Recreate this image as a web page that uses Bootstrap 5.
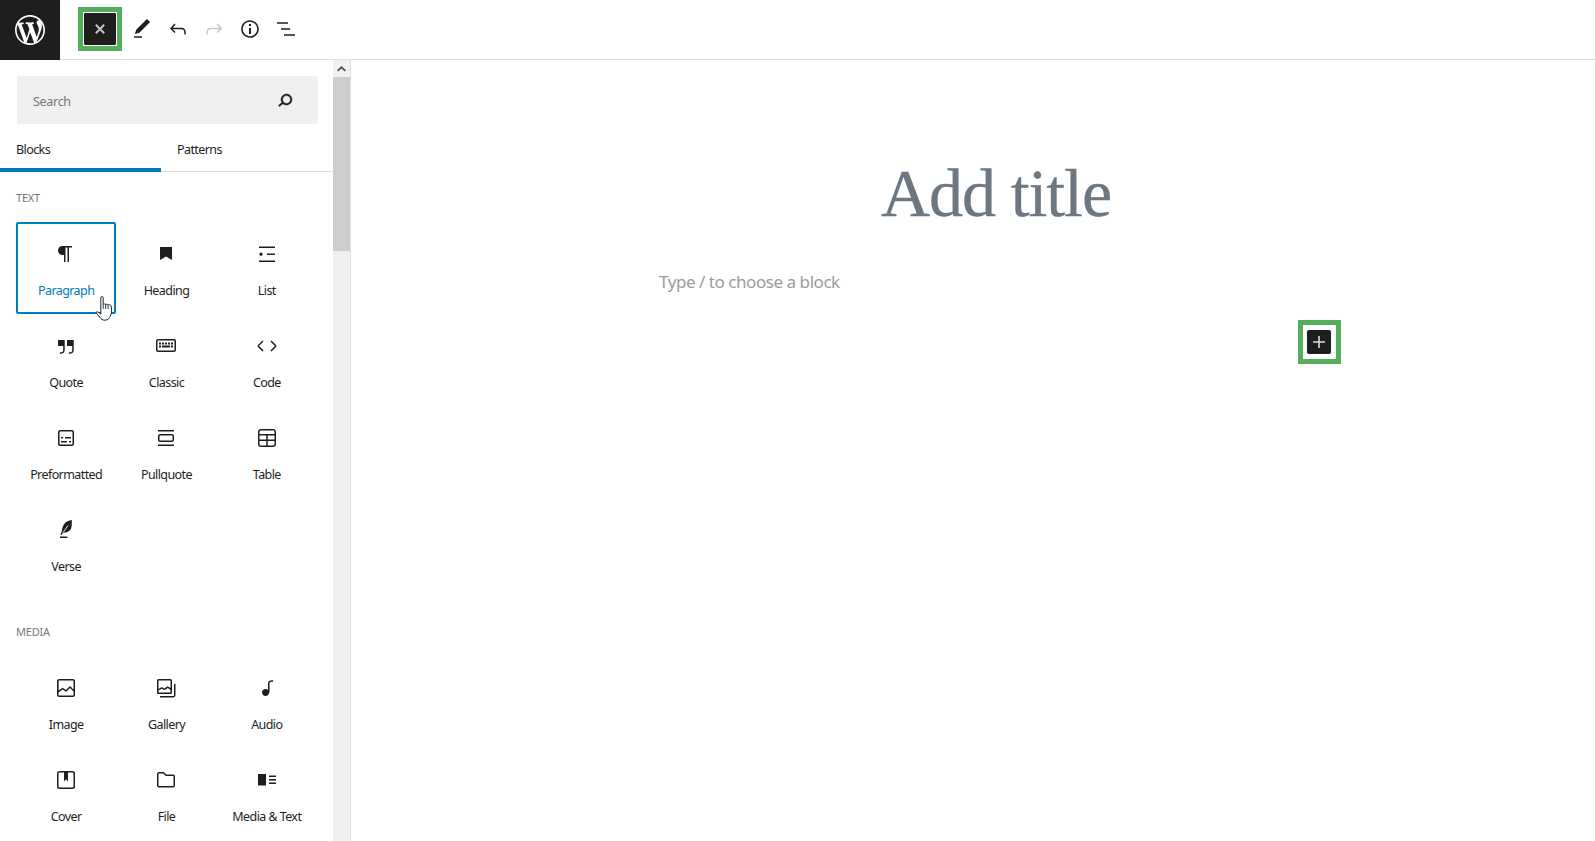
<!DOCTYPE html>
<html lang="en">
<head>
  <meta charset="UTF-8" />
  <meta name="viewport" content="width=device-width, initial-scale=1.0"/>
  <title>Add title</title>
  <link rel="stylesheet" href="https://cdn.jsdelivr.net/npm/bootstrap@5.3.0/dist/css/bootstrap.min.css"/>
  <style>
    body {
      font-family: "Noto Sans", sans-serif;
      font-size: 12.5px;
      letter-spacing: -.58px;
      color: #1e1e1e;
      background: #fff;
      overflow: hidden;
    }
    svg { fill: currentColor; display: block; }
    .top-bar { height: 60px; border-bottom: 1px solid #e0e0e0; }
    .wp-logo { width: 60px; height: 60px; background: #1e1e1e; color: #fff; }
    .hl-box { border: 5px solid #55ae5c; width: 44px; height: 44px; }
    .close-slot { margin: 7px 2px 0 18px; }
    .close-btn { width: 34px; height: 34px; background: #1e1e1e; color: #c4c4c4; border: 1px solid #fff; border-radius: 2px; }
    .tool-row { margin-top: 7px; }
    .tool-btn { width: 36px; height: 44px; }
    .tool-btn.off { color: #c8c8c8; }
    .work-area { height: 781px; }
    .side-panel { width: 351px; border-right: 1px solid #e0e0e0; }
    .side-inner { width: 333px; }
    .fake-scroll { width: 17px; background: #f0f0f0; }
    .scroll-up { height: 17px; background: #f1f1f1; color: #505050; }
    .scroll-thumb { height: 174px; background: #cdcdcd; }
    .search-box { height: 48px; margin: 16px 15px 0 17px; background: #f0f0f0; border-radius: 2px; padding: 5px 21px 0 16px; color: #757575; letter-spacing: -.3px; }
    .search-box svg { stroke: currentColor; stroke-width: .5; color: #1e1e1e; margin-top: -5px; }
    .tab-row { height: 48px; border-bottom: 1px solid #ddd; }
    .tab-row .nav-link { width: 161px; height: 48px; padding: 16px 0 0 16px; color: #1e1e1e; line-height: 20px; }
    .tab-row .nav-link.active { border-bottom: 4px solid #007cba; }
    .group-label { font-size: 11px; line-height: 16px; color: #757575; text-transform: uppercase; padding-left: 16px; letter-spacing: -.2px; }
    .text-label { margin-top: 18px; }
    .block-grid { padding: 0 16px; }
    .text-grid { margin-top: 16px; }
    .media-label { margin-top: 34px; }
    .media-grid { margin-top: 16px; }
    .block-item { height: 92px; padding-top: 20px; border: 2px solid transparent; border-radius: 2px; }
    .block-item svg { margin-top: -2px; }
    .block-item .block-name { line-height: 18px; margin-top: 16px; white-space: nowrap; }
    .block-item.picked { border-color: #007cba; color: #007cba; }
    .block-item.picked svg { color: #1e1e1e; }
    .hand-cursor { position: absolute; left: 95px; top: 236px; }
    .writing-col { width: 676px; margin-left: 308px; }
    .post-title { font-family: "Liberation Serif", serif; font-size: 68px; letter-spacing: -1.1px; line-height: 80px; color: #6c7781; margin: 93px 2px 0 0; font-weight: 400; -webkit-text-stroke: .3px #6c7781; }
    .type-hint { font-size: 17px; letter-spacing: -.45px; line-height: 26px; color: #9b9b9b; margin: 36px 0 0; }
    .plus-wrap { margin-top: 25px; margin-right: -6px; }
    .plus-box { width: 43px; padding: 5px 5px 5px 4px; }
    .plus-btn { width: 24px; height: 24px; background: #1e1e1e; color: #ddd; border-radius: 2px; }
  </style>
</head>
<body>
  <header class="top-bar d-flex align-items-start">
    <div class="wp-logo d-flex align-items-center justify-content-center">
      <svg width="30" height="30" viewBox="0 0 20 20"><path d="M20 10c0-5.51-4.49-10-10-10C4.48 0 0 4.49 0 10c0 5.52 4.48 10 10 10 5.51 0 10-4.48 10-10zM7.78 15.37L4.37 6.22c.55-.02 1.17-.08 1.17-.08.5-.06.44-1.13-.06-1.11 0 0-1.45.11-2.37.11-.18 0-.37 0-.58-.01C4.12 2.69 6.87 1.11 10 1.11c2.33 0 4.45.87 6.05 2.34-.68-.11-1.65.39-1.65 1.58 0 .74.45 1.36.9 2.1.35.61.55 1.36.55 2.46 0 1.49-1.4 5-1.4 5l-3.03-8.37c.54-.02.82-.17.82-.17.5-.05.44-1.25-.06-1.22 0 0-1.44.12-2.38.12-.87 0-2.33-.12-2.33-.12-.5-.03-.56 1.2-.06 1.22l.92.08 1.26 3.41zM17.41 10c.24-.64.74-1.87.43-4.25.7 1.29 1.05 2.71 1.05 4.25 0 3.29-1.73 6.24-4.4 7.78.97-2.59 1.94-5.2 2.92-7.78zM6.1 18.09C3.12 16.65 1.11 13.53 1.11 10c0-1.3.23-2.48.72-3.59C3.25 10.3 4.67 14.2 6.1 18.09zm4.03-6.63l2.58 6.98c-.86.29-1.76.45-2.71.45-.79 0-1.57-.11-2.29-.33.81-2.38 1.62-4.74 2.42-7.1z"/></svg>
    </div>
    <div class="hl-box close-slot">
      <div class="close-btn d-flex align-items-center justify-content-center">
        <svg width="10" height="10" viewBox="0 0 10 10"><path d="M.8.800l8.400 8.400M9.200.800L.8 9.200" stroke="currentColor" stroke-width="2"/></svg>
      </div>
    </div>
    <div class="d-flex tool-row">
      <div class="tool-btn d-flex align-items-center justify-content-center"><svg width="24" height="24" viewBox="0 0 24 24"><path d="M20.1 5.1L16.9 2 6.2 12.7l-1.3 4.4 4.5-1.3L20.1 5.1zM4 20.8h8v-1.5H4v1.5z"/></svg></div>
      <div class="tool-btn d-flex align-items-center justify-content-center"><svg width="24" height="24" viewBox="0 0 24 24"><path d="M18.3 11.7c-.6-.6-1.4-.9-2.3-.9H6.7l2.9-3.3-1.1-1-4.5 5L8.5 16l1-1-2.7-2.7H16c.5 0 .9.2 1.3.5 1 1 1 3.4 1 4.5v.3h1.5v-.2c0-1.5 0-4.3-1.5-5.7z"/></svg></div>
      <div class="tool-btn off d-flex align-items-center justify-content-center"><svg width="24" height="24" viewBox="0 0 24 24"><path d="M15.6 6.5l-1.1 1 2.9 3.3H8c-.9 0-1.7.3-2.3.9-1.4 1.5-1.4 4.2-1.4 5.6v.2h1.5v-.3c0-1.1 0-3.5 1-4.5.3-.3.7-.5 1.3-.5h9.2L14.5 15l1.1 1.1 4.6-4.6-4.6-5z"/></svg></div>
      <div class="tool-btn d-flex align-items-center justify-content-center"><svg width="24" height="24" viewBox="0 0 24 24"><path d="M12 3.2c-4.8 0-8.8 3.9-8.8 8.8 0 4.8 3.9 8.8 8.8 8.8 4.8 0 8.8-3.9 8.8-8.8 0-4.8-4-8.8-8.8-8.8zm0 16c-4 0-7.2-3.3-7.2-7.2C4.8 8 8 4.8 12 4.8s7.2 3.3 7.2 7.2c0 4-3.2 7.2-7.2 7.2zM11 17h2v-6h-2v6zm0-8h2V7h-2v2z"/></svg></div>
      <div class="tool-btn d-flex align-items-center justify-content-center"><svg width="24" height="24" viewBox="0 0 24 24"><path d="M3 5.2h11v1.5H3zM7 11.2h9v1.5H7zM10 17.2h11v1.5H10z"/></svg></div>
    </div>
  </header>

  <div class="work-area d-flex">
    <aside class="side-panel d-flex flex-shrink-0 position-relative">
      <div class="side-inner overflow-hidden">
        <div class="search-box d-flex align-items-center justify-content-between">
          <span>Search</span>
          <svg width="24" height="24" viewBox="0 0 24 24"><path d="M13.5 6C10.5 6 8 8.5 8 11.5c0 1.1.3 2.1.9 3l-3.4 3 1 1.1 3.4-2.9c1 .9 2.2 1.4 3.6 1.4 3 0 5.5-2.5 5.5-5.5C19 8.5 16.5 6 13.5 6zm0 9.5c-2.2 0-4-1.8-4-4s1.8-4 4-4 4 1.8 4 4-1.8 4-4 4z"/></svg>
        </div>
        <nav class="nav tab-row">
          <a class="nav-link active" href="#">Blocks</a>
          <a class="nav-link" href="#">Patterns</a>
        </nav>

        <div class="group-label text-label">Text</div>
        <div class="row g-0 block-grid text-grid">
          <div class="col-4"><div class="block-item picked d-flex flex-column align-items-center">
            <svg width="24" height="24" viewBox="0 0 24 24"><path d="M18 4H8.5C6 4 4 6 4 8.5S6 13 8.5 13H10v7h1.5V5.5h2V20H15V5.5h3V4z"/></svg>
            <div class="block-name">Paragraph</div>
          </div></div>
          <div class="col-4"><div class="block-item d-flex flex-column align-items-center">
            <svg width="24" height="24" viewBox="0 0 24 24"><path d="M6 5h12v13l-6-3.6L6 18z"/></svg>
            <div class="block-name">Heading</div>
          </div></div>
          <div class="col-4"><div class="block-item d-flex flex-column align-items-center">
            <svg width="24" height="24" viewBox="0 0 24 24"><path d="M4 4.5h16V6H4zM12 11.5h8V13h-8zM4 18.5h16V20H4z"/><circle cx="6" cy="12.2" r="1.6"/></svg>
            <div class="block-name">List</div>
          </div></div>
          <div class="col-4"><div class="block-item d-flex flex-column align-items-center">
            <svg width="24" height="24" viewBox="0 0 24 24"><path d="M13 6v6h5.2v4c0 .8-.2 1.4-.5 1.7-.6.6-1.6.6-2.5.5h-.3v1.5h.5c1 0 2.3-.1 3.3-1 .6-.6 1-1.6 1-2.8V6H13zm-9 6h5.2v4c0 .8-.2 1.4-.5 1.7-.6.6-1.6.6-2.5.5h-.3v1.5h.5c1 0 2.3-.1 3.3-1 .6-.6 1-1.6 1-2.8V6H4v6z"/></svg>
            <div class="block-name">Quote</div>
          </div></div>
          <div class="col-4"><div class="block-item d-flex flex-column align-items-center">
            <svg width="24" height="24" viewBox="0 0 24 24"><path d="M20 5H4c-1.1 0-2 .9-2 2v9c0 1.1.9 2 2 2h16c1.1 0 2-.9 2-2V7c0-1.1-.9-2-2-2zm.5 11c0 .3-.2.5-.5.5H4c-.3 0-.5-.2-.5-.5V7c0-.3.2-.5.5-.5h16c.3 0 .5.2.5.5v9zM5 8.500h2v2H5zM8 8.500h2v2H8zM11 8.500h2v2h-2zM14 8.500h2v2h-2zM17 8.500h2v2h-2zM5 11.500h2v2H5zM8 11.500h8v2H8zM17 11.500h2v2h-2z"/></svg>
            <div class="block-name">Classic</div>
          </div></div>
          <div class="col-4"><div class="block-item d-flex flex-column align-items-center">
            <svg width="24" height="24" viewBox="0 0 24 24"><path d="M20.8 10.7l-4.3-4.3-1.1 1.1 4.3 4.3c.1.1.1.3 0 .4l-4.3 4.3 1.1 1.1 4.3-4.3c.7-.8.7-1.9 0-2.6zM4.200 11.800l4.300-4.300-1-1-4.300 4.300c-.7.7-.7 1.800 0 2.500l4.300 4.300 1.100-1.100-4.300-4.300c-.2-.1-.2-.3-.1-.4z"/></svg>
            <div class="block-name">Code</div>
          </div></div>
          <div class="col-4"><div class="block-item d-flex flex-column align-items-center">
            <svg width="24" height="24" viewBox="0 0 24 24"><path d="M18 4H6c-1.1 0-2 .9-2 2v12c0 1.1.9 2 2 2h12c1.1 0 2-.9 2-2V6c0-1.1-.9-2-2-2zm.5 14c0 .3-.2.5-.5.5H6c-.3 0-.5-.2-.5-.5V6c0-.3.2-.5.5-.5h12c.3 0 .5.2.5.5v12zM7 16.500h6V15H7v1.500zm4-4h6V11h-6v1.500zM9 11H7v1.500h2V11zm6 5.500h2V15h-2v1.500z"/></svg>
            <div class="block-name">Preformatted</div>
          </div></div>
          <div class="col-4"><div class="block-item d-flex flex-column align-items-center">
            <svg width="24" height="24" viewBox="0 0 24 24"><path d="M18 8H6c-1.1 0-2 .9-2 2v4c0 1.1.9 2 2 2h12c1.1 0 2-.9 2-2v-4c0-1.1-.9-2-2-2zm.5 6c0 .3-.2.5-.5.5H6c-.3 0-.5-.2-.5-.5v-4c0-.3.2-.5.5-.5h12c.3 0 .5.2.5.5v4zM4 4v1.500h16V4H4zm0 16h16v-1.500H4V20z"/></svg>
            <div class="block-name">Pullquote</div>
          </div></div>
          <div class="col-4"><div class="block-item d-flex flex-column align-items-center">
            <svg width="24" height="24" viewBox="0 0 24 24"><path fill-rule="evenodd" d="M6 3h12c1.700 0 3 1.300 3 3v12c0 1.700-1.300 3-3 3H6c-1.700 0-3-1.300-3-3V6c0-1.700 1.300-3 3-3zM4.500 8h15V6c0-.8-.7-1.500-1.500-1.500H6c-.8 0-1.500.7-1.500 1.500zm0 1.500v4h6.750v-4zm8.250 0v4h6.750v-4zM4.500 15v3c0 .8.7 1.500 1.500 1.500h5.250V15zm8.250 0v4.500H18c.8 0 1.500-.7 1.500-1.500v-3z"/></svg>
            <div class="block-name">Table</div>
          </div></div>
          <div class="col-4"><div class="block-item d-flex flex-column align-items-center">
            <svg width="24" height="24" viewBox="0 0 24 24"><path d="M17.800 2c-3 .7-5.700 1.700-7.200 3.400C9 7.200 8.100 10.500 7.700 13.400l-1.300 3 1.300.6 1.100-2.300c3 .1 5.800-.8 7.400-2.600 1.700-1.900 1.700-6.300 1.600-10.100zM6 18.500h7.500V20H6z"/><path d="M9 14.500l5-7" stroke="#fff" stroke-width=".9"/></svg>
            <div class="block-name">Verse</div>
          </div></div>
        </div>

        <div class="group-label media-label">Media</div>
        <div class="row g-0 block-grid media-grid">
          <div class="col-4"><div class="block-item d-flex flex-column align-items-center">
            <svg width="24" height="24" viewBox="0 0 24 24"><path d="M19 3H5c-1.1 0-2 .9-2 2v14c0 1.100.9 2 2 2h14c1.100 0 2-.9 2-2V5c0-1.100-.9-2-2-2zM5 4.500h14c.3 0 .5.2.5.5v8.400l-3-2.900c-.3-.3-.8-.3-1 0L11.900 14 9 12c-.3-.2-.6-.2-.8 0l-3.600 2.600V5c-.1-.3.1-.5.4-.5zm14 15H5c-.3 0-.5-.2-.5-.5v-2.400l4.100-3 3 1.900c.3.2.7.2.9-.1L16 12l3.500 3.400V19c0 .3-.2.5-.5.5z"/></svg>
            <div class="block-name">Image</div>
          </div></div>
          <div class="col-4"><div class="block-item d-flex flex-column align-items-center">
            <svg width="24" height="24" viewBox="0 0 24 24"><path fill-rule="evenodd" d="M16.375 4.5H4.625a.125.125 0 0 0-.125.125v8.254l2.859-1.54a.75.75 0 0 1 .68-.016l2.384 1.142 2.89-2.074a.75.75 0 0 1 .874 0l2.313 1.66V4.625a.125.125 0 0 0-.125-.125zm.125 9.398-2.75-1.975-2.813 2.02a.75.75 0 0 1-.76.067l-2.444-1.17L4.5 14.583v1.792c0 .069.056.125.125.125h11.750a.125.125 0 0 0 .125-.125v-2.477zM4.625 3C3.728 3 3 3.728 3 4.625v11.750C3 17.273 3.728 18 4.625 18h11.750c.898 0 1.625-.727 1.625-1.625V4.625C18 3.728 17.273 3 16.375 3H4.625zM20 8v11c0 .69-.31 1-.999 1H6v1.5h13.001c1.520 0 2.499-.982 2.499-2.5V8H20z"/></svg>
            <div class="block-name">Gallery</div>
          </div></div>
          <div class="col-4"><div class="block-item d-flex flex-column align-items-center">
            <svg width="24" height="24" viewBox="0 0 24 24"><path d="M17.7 4.3c-1.2 0-2.8 0-3.800 1-.6.6-.9 1.500-.9 2.600V14c-.6-.6-1.500-1-2.500-1C8.600 13 7 14.600 7 16.500S8.600 20 10.500 20c1.500 0 2.800-1 3.300-2.300.5-.8.7-1.800.7-2.500V7.900c0-.7.2-1.200.5-1.600.6-.6 1.800-.6 2.800-.6h.3V4.300h-.4z"/></svg>
            <div class="block-name">Audio</div>
          </div></div>
          <div class="col-4"><div class="block-item d-flex flex-column align-items-center">
            <svg width="24" height="24" viewBox="0 0 24 24"><path d="M18.700 3H5.300C4 3 3 4 3 5.300v13.400C3 20 4 21 5.300 21h13.400c1.300 0 2.300-1 2.300-2.300V5.300C21 4 20 3 18.700 3zm.8 15.700c0 .4-.4.8-.8.8H5.300c-.4 0-.8-.4-.8-.8V5.300c0-.4.4-.8.8-.8h4.700v8.900l2-2.100 2 2.100V4.500h4.700c.4 0 .8.4.8.8v13.400z"/></svg>
            <div class="block-name">Cover</div>
          </div></div>
          <div class="col-4"><div class="block-item d-flex flex-column align-items-center">
            <svg width="24" height="24" viewBox="0 0 24 24"><path fill="none" stroke="currentColor" stroke-width="1.5" d="M5 4.750h4.500L12 7.250h7a1.250 1.250 0 0 1 1.250 1.250V17.500a1.250 1.250 0 0 1-1.250 1.250H5a1.250 1.250 0 0 1-1.250-1.250V6A1.250 1.250 0 0 1 5 4.750z"/></svg>
            <div class="block-name">File</div>
          </div></div>
          <div class="col-4"><div class="block-item d-flex flex-column align-items-center">
            <svg width="24" height="24" viewBox="0 0 24 24"><path d="M3 6v11.500h8V6H3zm11 3h7V7.500h-7V9zm7 3.500V11h-7v1.500h7zM14 16h7v-1.500h-7V16z"/></svg>
            <div class="block-name">Media &amp; Text</div>
          </div></div>
        </div>
      </div>

      <div class="fake-scroll d-flex flex-column">
        <div class="scroll-up d-flex align-items-center justify-content-center">
          <svg width="9" height="6" viewBox="0 0 9 6"><path d="M4.500 0L9 4.300 7.700 5.600 4.500 2.500 1.300 5.600 0 4.300z"/></svg>
        </div>
        <div class="scroll-thumb"></div>
      </div>

      <svg class="hand-cursor" width="19" height="25" viewBox="0 0 19 25">
        <path fill="#fff" stroke="#1b2530" stroke-width="1" d="M5.800 1.800C5.800 1 6.400.5 7 .5s1.200.5 1.200 1.300V8.500c.2-1 2.300-1 2.400.3.300-1 2.200-1 2.400.4.400-.8 2.800-.7 3.100.7.400 1.500.7 4.700.4 7-.3 1.500-1 2.600-1.400 3.600-.4 1.300-1.900 3.600-4.900 3.700-2.800.1-4.300-1.300-5.400-2.900-1-1.500-2.600-2.900-3.400-4.200-.5-.8.2-1.700 1.100-1.300.9.400 2.500 1.500 3.300 2.300z"/>
        <path fill="none" stroke="#1b2530" stroke-width=".9" d="M8.200 8.500v4.500M10.600 8.800v4.200M13 9.200v3.800"/>
      </svg>
    </aside>

    <main class="flex-grow-1">
      <div class="writing-col">
        <h1 class="post-title text-center">Add title</h1>
        <p class="type-hint">Type / to choose a block</p>
        <div class="plus-wrap d-flex justify-content-end">
          <div class="hl-box plus-box">
            <div class="plus-btn d-flex align-items-center justify-content-center">
              <svg width="24" height="24" viewBox="0 0 24 24"><path d="M18 11.2h-5.200V6h-1.600v5.200H6v1.600h5.200V18h1.600v-5.200H18z"/></svg>
            </div>
          </div>
        </div>
      </div>
    </main>
  </div>
</body>
</html>
